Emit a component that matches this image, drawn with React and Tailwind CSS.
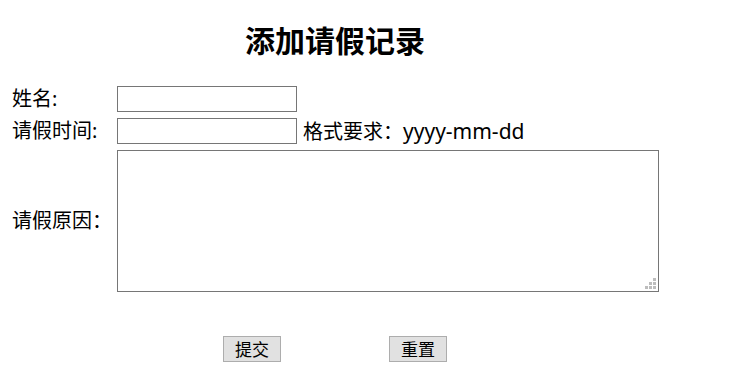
import React from 'react';

const font = { fontFamily: '"Noto Sans", "Noto Sans CJK SC", sans-serif' };

const fieldRow = 'flex items-center';
const labelCell = 'w-[109px] shrink-0 pl-[4px] text-[20px] leading-none text-black';
const inputBox = 'w-[180px] h-[26px] border border-[#767676] bg-white px-1 text-[16px] outline-none';
const btn = 'w-[58px] h-[26px] border border-[#adadad] bg-[#e1e1e1] text-[17px] leading-none text-black';

// dotted resize grip like the old textarea corner
const Grip = () => (
  <svg className="absolute right-[3px] bottom-[3px]" width="12" height="12" viewBox="0 0 12 12">
    <g fill="#bdbdbd">
      <rect x="9" y="1" width="3" height="3" />
      <rect x="5" y="5" width="3" height="3" />
      <rect x="9" y="5" width="3" height="3" />
      <rect x="1" y="9" width="3" height="3" />
      <rect x="5" y="9" width="3" height="3" />
      <rect x="9" y="9" width="3" height="3" />
    </g>
  </svg>
);

export default function App() {
  return (
    <div className="bg-white w-[733px] h-[368px] overflow-hidden pl-[8px] pt-[21px]" style={font}>
      <div className="w-[654px] h-[40px] text-center text-[30px] font-bold leading-[40px] text-black">
        添加请假记录
      </div>

      <form className="mt-[25px] flex flex-col gap-[6px]">
        <div className={fieldRow}>
          <span className={labelCell}>姓名:</span>
          <input type="text" className={inputBox} />
        </div>

        <div className={fieldRow}>
          <span className={labelCell}>请假时间:</span>
          <input type="text" className={inputBox} />
          <span className="ml-[6px] text-[20px] leading-none text-black">
            格式要求：<span className="text-[21px]">yyyy-mm-dd</span>
          </span>
        </div>

        <div className={fieldRow}>
          <span className={labelCell}>请假原因：</span>
          <div className="relative w-[542px] h-[142px]">
            <textarea className="w-full h-full resize-none border border-[#767676] bg-white p-1 text-[16px] outline-none" />
            <Grip />
          </div>
        </div>

        {/* buttons */}
        <div className="mt-[38px] flex items-center">
          <button type="submit" className={`${btn} ml-[215px]`}>提交</button>
          <button type="reset" className={`${btn} ml-[108px]`}>重置</button>
        </div>
      </form>
    </div>
  );
}
